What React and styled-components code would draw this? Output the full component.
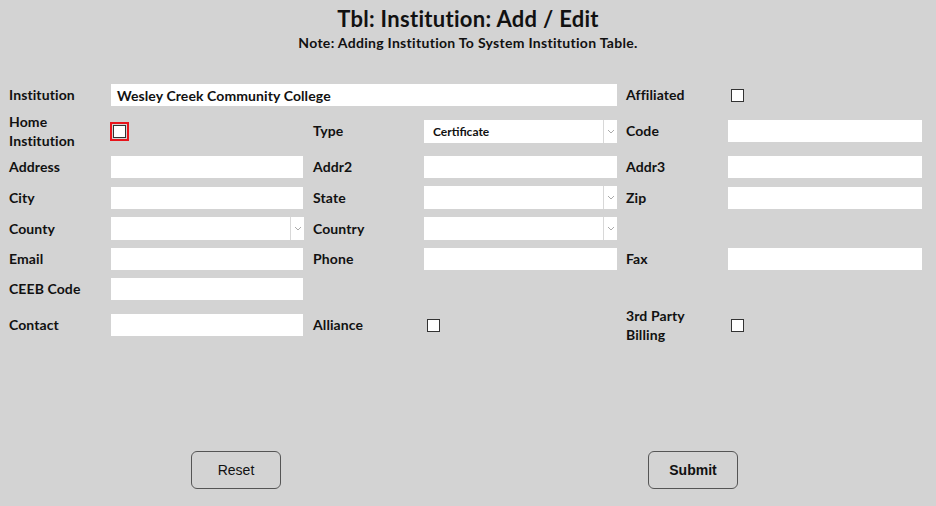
import React from 'react'
import styled, { createGlobalStyle } from 'styled-components'

const GlobalStyle = createGlobalStyle`
  html, body {
    margin: 0;
    padding: 0;
    background: #d3d3d3;
  }
  body {
    font-family: Lato, "Noto Sans", sans-serif;
    color: #111;
  }
`

const Page = styled.div`
  width: 936px;
  height: 506px;
  background: #d3d3d3;
  display: flex;
  flex-direction: column;
`

const Header = styled.div`
  display: flex;
  flex-direction: column;
  align-items: center;
  padding-top: 6px;
`

const Title = styled.h1`
  margin: 0;
  font-size: 22px;
  line-height: 26px;
  font-weight: 700;
  letter-spacing: 0.3px;
`

const Note = styled.div`
  margin-top: 3px;
  font-size: 14px;
  line-height: 16px;
  font-weight: 700;
  letter-spacing: 0.3px;
`

const Form = styled.div`
  display: grid;
  grid-template-columns: 102px 202px 111px 202px 102px 194px;
  row-gap: 8px;
  align-items: center;
  padding: 33px 0 0 9px;
`

const Label = styled.div`
  font-size: 14px;
  line-height: ${({ $two }) => ($two ? '19px' : '18px')};
  margin: ${({ $two }) => ($two ? '-2px 0' : '0')};
  font-weight: 700;
  letter-spacing: 0.1px;
`

const TextBox = styled.div`
  height: 22px;
  width: ${({ $w }) => $w || 192}px;
  grid-column: ${({ $span }) => ($span ? `span ${$span}` : 'auto')};
  background: #fff;
  box-sizing: border-box;
  display: flex;
  align-items: center;
  padding-left: 6px;
  font-size: 14px;
  font-weight: 700;
  letter-spacing: 0.1px;
`

const Select = styled.div`
  height: 23px;
  width: 193px;
  background: #fff;
  box-sizing: border-box;
  display: flex;
  align-items: center;
  font-size: 12px;
  font-weight: 700;
`

const SelectText = styled.div`
  flex: 1;
  padding-left: 9px;
`

const Arrow = styled.div`
  width: 13px;
  height: 100%;
  border-left: 1px solid #d8d8d8;
  display: flex;
  align-items: center;
  justify-content: center;
`

const Check = styled.div`
  width: 13px;
  height: 13px;
  margin-left: ${({ $focus }) => ($focus ? '2px' : '3px')};
  box-sizing: border-box;
  background: #fff;
  border: 1px solid #333;
  outline: ${({ $focus }) => ($focus ? '2px solid #e8141b' : 'none')};
  outline-offset: 1px;
`

const Empty = styled.div``

const Buttons = styled.div`
  display: flex;
  justify-content: center;
  gap: 367px;
  padding-right: 7px;
  margin-top: 109px;
`

const Button = styled.button`
  width: 90px;
  height: 38px;
  background: transparent;
  border: 1px solid #555;
  border-radius: 6px;
  font-family: "Liberation Sans", Arial, sans-serif;
  font-size: 14px;
  color: #111;
  font-weight: ${({ $bold }) => ($bold ? 700 : 400)};
`

const Chevron = () => (
  <svg width="8" height="5" viewBox="0 0 8 5">
    <path d="M1 1 L4 4 L7 1" fill="none" stroke="#aaa" strokeWidth="1" />
  </svg>
)

const Dropdown = ({ value }) => (
  <Select>
    <SelectText>{value}</SelectText>
    <Arrow><Chevron /></Arrow>
  </Select>
)

const App = () => (
  <Page>
    <GlobalStyle />
    <Header>
      <Title>Tbl: Institution: Add / Edit</Title>
      <Note>Note: Adding Institution To System Institution Table.</Note>
    </Header>
    <Form>
      <Label>Institution</Label>
      <TextBox $span={3} $w={506}>Wesley Creek Community College</TextBox>
      <Label>Affiliated</Label>
      <Check />

      <Label $two>Home<br />Institution</Label>
      <Check $focus />
      <Label>Type</Label>
      <Dropdown value="Certificate" />
      <Label>Code</Label>
      <TextBox $w={194} />

      <Label>Address</Label>
      <TextBox />
      <Label>Addr2</Label>
      <TextBox $w={193} />
      <Label>Addr3</Label>
      <TextBox $w={194} />

      <Label>City</Label>
      <TextBox />
      <Label>State</Label>
      <Dropdown />
      <Label>Zip</Label>
      <TextBox $w={194} />

      <Label>County</Label>
      <Dropdown />
      <Label>Country</Label>
      <Dropdown />
      <Empty />
      <Empty />

      <Label>Email</Label>
      <TextBox />
      <Label>Phone</Label>
      <TextBox $w={193} />
      <Label>Fax</Label>
      <TextBox $w={194} />

      <Label>CEEB Code</Label>
      <TextBox />
      <Empty />
      <Empty />
      <Empty />
      <Empty />

      <Label>Contact</Label>
      <TextBox />
      <Label>Alliance</Label>
      <Check />
      <Label $two>3rd Party<br />Billing</Label>
      <Check />
    </Form>
    <Buttons>
      <Button>Reset</Button>
      <Button $bold>Submit</Button>
    </Buttons>
  </Page>
)

export default App
